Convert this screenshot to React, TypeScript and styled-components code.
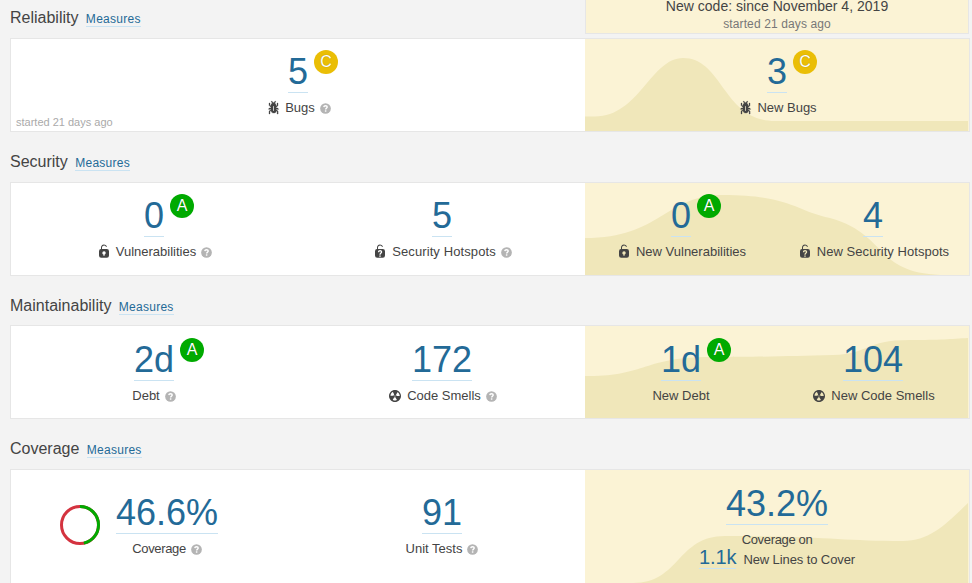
import React from 'react';
import styled, { createGlobalStyle } from 'styled-components';

const GlobalStyle = createGlobalStyle`
  * { box-sizing: border-box; }
  body {
    margin: 0;
    background: #f3f3f3;
    color: #444;
    font-family: "Liberation Sans", Arial, sans-serif;
    font-size: 13px;
    overflow: hidden;
  }
`;

const Page = styled.main`
  width: 972px;
  height: 583px;
  overflow: hidden;
  padding-left: 10px;
`;

const Section = styled.section<{ $height: number }>`
  display: flex;
  flex-direction: column;
  height: ${(p) => p.$height}px;
`;

const TopBar = styled.div`
  display: grid;
  grid-template-columns: 575px 384px;
  height: 38px;
  flex-shrink: 0;
`;

const Heading = styled.header<{ $top?: number }>`
  display: flex;
  align-items: baseline;
  flex-shrink: 0;
  height: 38px;
  padding-top: ${(p) => p.$top ?? 8}px;
`;

const Title = styled.h2`
  margin: 0;
  font-size: 16px;
  font-weight: 400;
  line-height: 20px;
`;

const MeasuresLink = styled.a`
  margin-left: 7.4px;
  font-size: 12px;
  line-height: 14px;
  letter-spacing: 0.27px;
  color: #236a97;
  border-bottom: 1px solid #cae3f2;
`;

const LeakHeader = styled.div`
  height: 34px;
  background: #fbf3d5;
  border: 1px solid #e6e6e6;
  border-top: 0;
  text-align: center;
`;

const LeakTitle = styled.div`
  font-size: 14px;
  line-height: 12px;
  letter-spacing: 0.02px;
`;

const LeakAge = styled.div`
  margin-top: 4px;
  font-size: 12px;
  line-height: 16px;
  letter-spacing: 0.12px;
  color: #777;
`;

const Card = styled.div<{ $height: number }>`
  display: grid;
  grid-template-columns: 574px 384px;
  width: 960px;
  height: ${(p) => p.$height}px;
  flex-shrink: 0;
  background: #fff;
  border: 1px solid #e6e6e6;
`;

const Half = styled.div<{ $leak?: boolean }>`
  position: relative;
  display: flex;
  gap: ${(p) => (p.$leak ? 0 : 2)}px;
  min-width: 0;
  background: ${(p) => (p.$leak ? '#fbf3d5' : '#fff')};
`;

const Timeline = styled.svg`
  position: absolute;
  left: 0;
  top: 0;
  display: block;
`;

const StartedNote = styled.span`
  position: absolute;
  left: 5px;
  bottom: 2px;
  font-size: 11px;
  line-height: 13px;
  color: #aaa;
`;

const Cell = styled.div<{ $top?: number }>`
  position: relative;
  flex: 1 1 0;
  display: flex;
  flex-direction: column;
  align-items: center;
  padding-top: ${(p) => p.$top ?? 12}px;
`;

const DonutCell = styled.div`
  flex: 0 0 286px;
  display: flex;
  gap: 16px;
  padding: 22px 0 0 49px;
`;

const DonutIcon = styled.svg`
  margin-top: 13px;
  flex-shrink: 0;
`;

const Stack = styled.div`
  display: flex;
  flex-direction: column;
  align-items: center;
`;

const ValueBox = styled.div`
  position: relative;
`;

const Value = styled.a`
  display: block;
  height: 42px;
  font-size: 36px;
  line-height: 41px;
  color: #236a97;
  border-bottom: 1px solid #cae3f2;
`;

const Rating = styled.span<{ $level: 'A' | 'C' }>`
  position: absolute;
  left: calc(100% + 6px);
  top: -1px;
  width: 24px;
  height: 24px;
  border-radius: 50%;
  background: ${(p) => (p.$level === 'A' ? '#0a0' : '#eabe06')};
  color: #fff;
  font-size: 16px;
  line-height: 24px;
  text-align: center;
  text-shadow: 0 0 1px rgba(0, 0, 0, 0.35);
`;

const Label = styled.div<{ $spacing?: number }>`
  display: flex;
  align-items: center;
  margin-top: 5px;
  line-height: 20px;
  white-space: nowrap;
  letter-spacing: ${(p) => p.$spacing ?? 0}px;
`;

const LabelIcon = styled.svg`
  margin-right: 4px;
  flex-shrink: 0;
`;

const HelpSvg = styled.svg`
  margin: 1px 0 0 5px;
  flex-shrink: 0;
`;

const LinesLabel = styled.div`
  display: flex;
  align-items: baseline;
  gap: 7px;
  margin-top: -4px;
  line-height: 20px;
  letter-spacing: -0.1px;
  white-space: nowrap;
`;

const SmallValue = styled.a`
  font-size: 20px;
  line-height: 22px;
  letter-spacing: -0.1px;
  color: #236a97;
  border-bottom: 1px solid #cae3f2;
`;

type Kind = 'bug' | 'lock' | 'hotspot' | 'smell';

const LOCK =
  'M10.8 5H6V3.9a2.28 2.28 0 0 1 2-2.5 2.22 2.22 0 0 1 1.8 1.2.48.48 0 0 0 .7.2.48.48 0 0 0 .2-.7A3 3 0 0 0 8 .4a3.34 3.34 0 0 0-3 3.5v1.2a2.16 2.16 0 0 0-2 2.1v4.4a2.22 2.22 0 0 0 2.2 2.2h5.6a2.22 2.22 0 0 0 2.2-2.2V7.2A2.22 2.22 0 0 0 10.8 5z';

const PATHS: Record<Kind, string> = {
  bug: 'M11 9h1.3l.5.8.8-.5-.8-1.3H11v-.3l2-2.3V3h-1v2l-1 1.2V5c-.1-.8-.7-1.5-1.4-1.9L11 1.8l-.7-.7-1.8 1.6-1.8-1.6-.7.7 1.5 1.3C6.7 3.5 6.1 4.2 6 5v1.1L5 5V3H4v2.3l2 2.3V8H4.2l-.7 1.2.8.5.4-.7H6v.3l-2 1.9V14h1v-2.4l1-1C6 12 7.1 13 8.4 13h.8c.7 0 1.4-.3 1.8-.9.3-.4.3-.9.2-1.4l.9.9V14h1v-2.8l-2-1.9V9zm-2 2H8V6h1v5z',
  lock: LOCK + 'M8.6 10.5v1.2H7.4v-1.2a1.66 1.66 0 0 1-1.1-1.6A1.75 1.75 0 0 1 8 7.2a1.71 1.71 0 0 1 .6 3.3z',
  hotspot:
    LOCK +
    'M7.3 11.5h1.4v1.3H7.3zM5.9 8.2C6 6.9 6.8 6.1 8.1 6.1c1.2 0 2.1.8 2.1 1.9 0 .8-.4 1.2-.9 1.6-.4.3-.6.5-.6.9v.3H7.4v-.4c0-.8.4-1.2.9-1.6.4-.3.5-.5.5-.8 0-.4-.3-.7-.7-.7-.5 0-.8.3-.8.9z',
  smell:
    'M8 2C4.7 2 2 4.7 2 8s2.7 6 6 6 6-2.7 6-6-2.7-6-6-6zm-.5 5.5h.9v.9h-.9v-.9zm-3.8.2c-.1 0-.2-.1-.2-.2 0-.4.1-1.2.6-2S5.3 4.2 5.6 4c.2 0 .3 0 .3.1l1.3 2.3c0 .1 0 .2-.1.2-.1.2-.2.3-.3.5-.1.2-.2.4-.2.5 0 .1-.1.2-.2.2l-2.7-.1zM9.9 12c-.3.2-1.1.5-2 .5-.9 0-1.7-.3-2-.5-.1 0-.1-.2-.1-.3l1.3-2.3c0-.1.1-.1.2-.1.2.1.3.1.5.1s.4 0 .5-.1c.1 0 .2 0 .2.1l1.3 2.3c.2.2.2.3.1.3zm2.5-4.1L9.7 8c-.1 0-.2-.1-.2-.2 0-.2-.1-.4-.2-.5 0-.1-.1-.3-.2-.5 0-.1 0-.2.1-.2l1.3-2.3.3-.1c.2.2.8.7 1.3 1.5.5.8.6 1.6.6 2 0 .1-.1.2-.3.2z',
};

function Icon({ kind }: { kind: Kind }) {
  return (
    <LabelIcon width="16" height="16" viewBox="0 0 16 16">
      <path
        d={PATHS[kind]}
        fill="#444"
        fillRule="evenodd"
        stroke="#444"
        strokeWidth={kind === 'bug' ? 0.3 : 0}
      />
    </LabelIcon>
  );
}

function Help() {
  return (
    <HelpSvg width="11" height="11" viewBox="0 0 14 14">
      <circle cx="7" cy="7" r="6.8" fill="#b4b4b4" />
      <path
        d="M4.8 5.3C5 3.9 5.9 3.5 7 3.5c1.3 0 2.2.6 2.2 1.7C9.2 6.7 7.2 6.5 7.2 8.4"
        fill="none"
        stroke="#fff"
        strokeWidth="1.8"
      />
      <rect x="6.2" y="9.3" width="1.9" height="1.8" fill="#fff" />
    </HelpSvg>
  );
}

interface MeasureProps {
  value: string;
  label: string;
  rating?: 'A' | 'C';
  icon?: Kind;
  help?: boolean;
  spacing?: number;
  top?: number;
}

function MeasureBody({ value, label, rating, icon, help, spacing }: MeasureProps) {
  return (
    <>
      <ValueBox>
        <Value>{value}</Value>
        {rating && <Rating $level={rating}>{rating}</Rating>}
      </ValueBox>
      <Label $spacing={spacing}>
        {icon && <Icon kind={icon} />}
        {label}
        {help && <Help />}
      </Label>
    </>
  );
}

function Measure(props: MeasureProps) {
  return (
    <Cell $top={props.top}>
      <MeasureBody {...props} />
    </Cell>
  );
}

function Area({ d, height = 92 }: { d: string; height?: number }) {
  return (
    <Timeline width="383" height={height} viewBox={`0 0 383 ${height}`}>
      <path d={d} fill="#f0e7ba" />
    </Timeline>
  );
}

function SectionHeading({ title, top }: { title: string; top?: number }) {
  return (
    <Heading $top={top}>
      <Title>{title}</Title>
      <MeasuresLink>Measures</MeasuresLink>
    </Heading>
  );
}

export default function App() {
  return (
    <Page>
      <GlobalStyle />
      <Section $height={144}>
        <TopBar>
          <SectionHeading title="Reliability" />
          <LeakHeader>
            <LeakTitle>New code: since November 4, 2019</LeakTitle>
            <LeakAge>started 21 days ago</LeakAge>
          </LeakHeader>
        </TopBar>
        <Card $height={94}>
          <Half>
            <Measure value="5" rating="C" icon="bug" label="Bugs" help />
            <StartedNote>started 21 days ago</StartedNote>
          </Half>
          <Half $leak>
            <Area d="M0 77.5H10C54 77.5 66 19 98 19C138 19 138 82 190 82H383V92H0Z" />
            <Measure value="3" rating="C" icon="bug" label="New Bugs" />
          </Half>
        </Card>
      </Section>

      <Section $height={143}>
        <SectionHeading title="Security" />
        <Card $height={94}>
          <Half>
            <Measure value="0" rating="A" icon="lock" label="Vulnerabilities" help />
            <Measure value="5" icon="hotspot" label="Security Hotspots" spacing={0.1} help />
          </Half>
          <Half $leak>
            <Area d="M0 55C76 55 80 12 138 12C205 12 211 28 245 35C305 52 288 92 362 92H0Z" />
            <Measure value="0" rating="A" icon="lock" label="New Vulnerabilities" />
            <Measure value="4" icon="hotspot" label="New Security Hotspots" spacing={0.04} />
          </Half>
        </Card>
      </Section>

      <Section $height={144}>
        <SectionHeading title="Maintainability" top={9} />
        <Card $height={94}>
          <Half>
            <Measure value="2d" rating="A" label="Debt" top={13} help />
            <Measure value="172" icon="smell" label="Code Smells" top={13} help />
          </Half>
          <Half $leak>
            <Area d="M0 50C60 51 58 31 125 31C180 31 205 30 248 29C285 28 279 14 325 14C355 14 366 13 383 12V92H0Z" />
            <Measure value="1d" rating="A" label="New Debt" top={13} />
            <Measure value="104" icon="smell" label="New Code Smells" top={13} />
          </Half>
        </Card>
      </Section>

      <Section $height={152}>
        <SectionHeading title="Coverage" />
        <Card $height={130}>
          <Half>
            <DonutCell>
              <DonutIcon width="40" height="40" viewBox="0 0 40 40">
                <circle cx="20" cy="20" r="18.5" fill="none" stroke="#d4333f" strokeWidth="3" />
                <circle
                  cx="20"
                  cy="20"
                  r="18.5"
                  fill="none"
                  stroke="#0a0"
                  strokeWidth="3"
                  pathLength="100"
                  strokeDasharray="46.6 53.4"
                  transform="rotate(-90 20 20)"
                />
              </DonutIcon>
              <Stack>
                <MeasureBody value="46.6%" label="Coverage" spacing={-0.37} help />
              </Stack>
            </DonutCell>
            <Measure value="91" label="Unit Tests" top={22} help />
          </Half>
          <Half $leak>
            <Area
              height={128}
              d="M0 113H48C95 113 92 66 140 66C238 66 256 71 318 71C345 71 361 54 383 33V128H0Z"
            />
            <Cell $top={13}>
              <Value>43.2%</Value>
              <Label $spacing={-0.35}>Coverage on</Label>
              <LinesLabel>
                <SmallValue>1.1k</SmallValue>
                New Lines to Cover
              </LinesLabel>
            </Cell>
          </Half>
        </Card>
      </Section>
    </Page>
  );
}
